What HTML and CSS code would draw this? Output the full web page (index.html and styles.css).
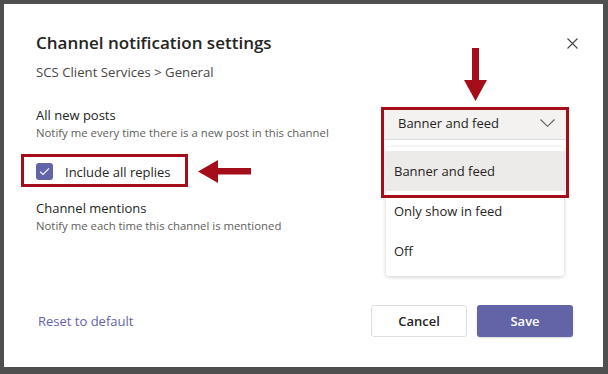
FILE: index.html
```html
<!DOCTYPE html>
<html lang="en">
<head>
    <meta charset="UTF-8">
    <title>Channel notification settings</title>
    <link rel="stylesheet" href="styles.css">
</head>
<body>
    <div class="dialog">
        <div class="dialog-header">
            <h1>Channel notification settings</h1>
            <button class="close-btn" aria-label="Close">
                <svg width="11" height="11" viewBox="0 0 11 11">
                    <path d="M0.5 0.5 L10.5 10.5 M10.5 0.5 L0.5 10.5" stroke="#484644" stroke-width="1.1" fill="none"/>
                </svg>
            </button>
        </div>
        <div class="subtitle">SCS Client Services &gt; General</div>

        <div class="settings">
            <div class="settings-text">
                <div class="setting-label">All new posts</div>
                <div class="setting-desc">Notify me every time there is a new post in this channel</div>

                <div class="checkbox-row">
                    <span class="checkbox">
                        <svg width="11" height="9" viewBox="0 0 11 9">
                            <path d="M1 4.6 L4 7.4 L10 1.4" stroke="#fff" stroke-width="1.1" fill="none"/>
                        </svg>
                    </span>
                    <span class="checkbox-text">Include all replies</span>
                    <!-- annotation -->
                    <div class="mark-box mark-check"></div>
                    <svg class="arrow-left" width="53" height="23" viewBox="0 0 53 23">
                        <polygon points="0,11.5 20,0 20,8 53,8 53,14.5 20,14.5 20,23" fill="#a50d1b"/>
                    </svg>
                </div>

                <div class="setting-label mentions">Channel mentions</div>
                <div class="setting-desc">Notify me each time this channel is mentioned</div>
            </div>

            <div class="dropdown-col">
                <div class="dropdown">
                    <span>Banner and feed</span>
                    <svg width="15" height="8" viewBox="0 0 15 8">
                        <path d="M0.5 0.5 L7.5 7.3 L14.5 0.5" stroke="#605e5c" stroke-width="1.1" fill="none"/>
                    </svg>
                </div>
                <ul class="menu">
                    <li class="active">Banner and feed</li>
                    <li>Only show in feed</li>
                    <li>Off</li>
                </ul>
                <!-- annotation -->
                <div class="mark-box mark-dropdown"></div>
                <svg class="arrow-down" width="23" height="53" viewBox="0 0 23 53">
                    <polygon points="8,0 15,0 15,32 23,32 11.5,53 0,32 8,32" fill="#a50d1b"/>
                </svg>
            </div>
        </div>

        <div class="dialog-footer">
            <a href="#" class="reset-link">Reset to default</a>
            <div class="buttons">
                <button class="btn btn-cancel">Cancel</button>
                <button class="btn btn-save">Save</button>
            </div>
        </div>
    </div>
</body>
</html>
```

FILE: styles.css
```css
body {
    margin: 0;
    padding: 4px 5px 7px 4px;
    background-color: #4f4f4f;
    font-family: 'Open Sans', 'Noto Sans', sans-serif;
    color: #252423;
}

.dialog {
    box-sizing: border-box;
    width: 599px;
    height: 363px;
    background-color: white;
    padding: 27px 30px 30px 32px;
    display: flex;
    flex-direction: column;
}

.dialog-header {
    display: flex;
    justify-content: space-between;
    align-items: center;
    height: 24px;
}

h1 {
    margin: 0;
    font-size: 17px;
    font-weight: 600;
    line-height: 24px;
}

.close-btn {
    border: none;
    background: none;
    padding: 0;
    margin-right: -5px;
    width: 11px;
    height: 11px;
    display: flex;
}

.subtitle {
    margin-top: 8px;
    font-size: 13.2px;
    line-height: 18px;
    color: #484644;
}

.settings {
    display: flex;
    justify-content: space-between;
    margin-top: 24px;
}

.setting-label {
    font-size: 13px;
    line-height: 20px;
}

.setting-desc {
    font-size: 11.35px;
    line-height: 16px;
    color: #605e5c;
}

.checkbox-row {
    position: relative;
    display: flex;
    align-items: center;
    height: 17px;
    margin-top: 22px;
}

.checkbox {
    box-sizing: border-box;
    width: 17px;
    height: 17px;
    border-radius: 3px;
    background-color: #6264a7;
    display: flex;
    align-items: center;
    justify-content: center;
}

.checkbox-text {
    margin-left: 12px;
    font-size: 13px;
}

.mentions {
    margin-top: 18px;
}

.mark-box {
    position: absolute;
    box-sizing: border-box;
    border: 3.5px solid #a50d1b;
}

.mark-check {
    top: -9px;
    left: -15px;
    width: 167px;
    height: 33px;
}

.arrow-left {
    position: absolute;
    left: 162px;
    top: -3px;
}

.dropdown-col {
    position: relative;
    width: 188px;
    margin-top: 2px;
    margin-right: 4px;
}

.dropdown {
    box-sizing: border-box;
    height: 33px;
    background-color: #f3f2f1;
    border-bottom: 1px solid #e1dfdd;
    display: flex;
    align-items: center;
    justify-content: space-between;
    padding: 0 14px 0 17px;
    font-size: 13px;
}

.menu {
    position: absolute;
    top: 40px;
    left: 5px;
    width: 178px;
    margin: 0;
    padding: 4px 0 5px;
    list-style: none;
    background-color: white;
    border-radius: 3px;
    box-shadow: 0 1px 4px rgba(0,0,0,0.2);
}

.menu li {
    height: 40px;
    line-height: 40px;
    padding-left: 8px;
    font-size: 13px;
}

.menu li.active {
    background-color: #edebe9;
}

.mark-dropdown {
    top: 0;
    left: 0;
    width: 188px;
    height: 91px;
}

.arrow-down {
    position: absolute;
    left: 83px;
    top: -59px;
}

.dialog-footer {
    margin-top: auto;
    display: flex;
    justify-content: space-between;
    align-items: center;
}

.reset-link {
    margin-left: 2px;
    font-size: 13px;
    color: #6264a7;
    text-decoration: none;
}

.buttons {
    display: flex;
    gap: 10px;
}

.btn {
    box-sizing: border-box;
    width: 96px;
    height: 32px;
    border-radius: 3px;
    font-family: 'Open Sans', 'Noto Sans', sans-serif;
    font-size: 13px;
    font-weight: 600;
    cursor: pointer;
}

.btn-cancel {
    background-color: white;
    border: 1px solid #e1dfdd;
    color: #252423;
}

.btn-save {
    background-color: #6264a7;
    border: none;
    color: white;
    box-shadow: 0 1px 2px rgba(0,0,0,0.15);
}
```
